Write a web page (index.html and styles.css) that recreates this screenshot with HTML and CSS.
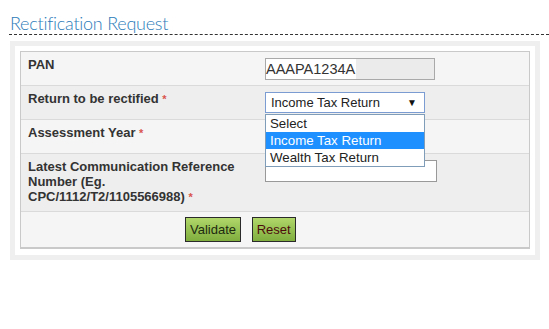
FILE: index.html
```html
<!DOCTYPE html>
<html>
<head>
<meta charset="utf-8">
<link rel="stylesheet" href="styles.css">
</head>
<body>
<h2 class="page-title">Rectification Request</h2>
<div class="panel">
  <table class="form-table">
    <tr class="row-light">
      <td class="label">PAN</td>
      <td class="field"><div class="pan-input"><span class="pan-text">AAAPA1234A</span></div></td>
    </tr>
    <tr class="row-dark">
      <td class="label">Return to be rectified <span class="req">*</span></td>
      <td class="field">
        <div class="select-wrap">
          <div class="select-box"><span>Income Tax Return</span><span class="arrow">&#9660;</span></div>
          <ul class="dropdown">
            <li>Select</li>
            <li class="active">Income Tax Return</li>
            <li>Wealth Tax Return</li>
          </ul>
        </div>
      </td>
    </tr>
    <tr class="row-light">
      <td class="label">Assessment Year <span class="req">*</span></td>
      <td class="field"></td>
    </tr>
    <tr class="row-dark tall">
      <td class="label">Latest Communication Reference Number (Eg. CPC/1112/T2/1105566988) <span class="req">*</span></td>
      <td class="field"><div class="text-input"></div></td>
    </tr>
    <tr class="row-light last">
      <td colspan="2" class="actions">
        <button class="btn btn-validate">Validate</button>
        <button class="btn btn-reset">Reset</button>
      </td>
    </tr>
  </table>
</div>
</body>
</html>
```
FILE: styles.css
```css
html, body {
  margin: 0;
  padding: 0;
  background: #fff;
}
body {
  font-family: Arial, "Liberation Sans", sans-serif;
  overflow: hidden;
}
.page-title {
  margin: 0 0 0 9px;
  padding: 13px 0 0 1px;
  font-family: Lato, "Open Sans", sans-serif;
  font-weight: 300;
  font-size: 18px;
  letter-spacing: -0.25px;
  line-height: 21px;
  color: #2b7bb9;
  border-bottom: 1px dashed #333;
  height: 21px;
}
.panel {
  margin: 6px 0 0 10px;
  width: 510px;
  border: 5px solid #efefef;
  padding: 5px 5px 6px 5px;
  background: #fff;
}
.form-table {
  width: 510px;
  border-collapse: separate;
  border-spacing: 0;
  border: 1px solid #c9c9c9;
  border-bottom-width: 2px;
  font-size: 13px;
  color: #333;
}
.form-table td {
  box-sizing: border-box;
  vertical-align: top;
  border-bottom: 1px solid #dadada;
  padding: 0;
}
.form-table tr.last td {
  border-bottom: 0;
}
.row-light td { background: #f5f5f5; }
.row-dark td { background: #eeeeee; }
.form-table tr td { height: 34px; }
.form-table tr.tall td { height: 58px; }
.form-table tr.last td { height: 35px; }
.label {
  width: 244px;
  padding: 5px 7px 0 7px !important;
  font-weight: bold;
  line-height: 15px;
}
.req {
  color: #d9534f;
  font-size: 11px;
}
.field {
  padding: 6px 0 0 0 !important;
}
.pan-input {
  width: 168px;
  height: 20px;
  border: 1px solid #a9a9a9;
  background: #ebebeb;
  font-size: 14.5px;
  line-height: 20px;
}
.pan-text {
  display: inline-block;
  background: #fff;
  padding-right: 1px;
}
.select-wrap {
  position: relative;
  width: 160px;
}
.select-box {
  box-sizing: border-box;
  width: 160px;
  height: 21px;
  border: 1px solid #7a9cd3;
  background: #fff;
  display: flex;
  align-items: center;
  justify-content: space-between;
  padding: 0 7px 0 5px;
  font-size: 13px;
  color: #222;
}
.arrow {
  font-size: 10px;
  color: #111;
}
.dropdown {
  position: absolute;
  left: 0;
  top: 22px;
  width: 160px;
  box-sizing: border-box;
  margin: 0;
  padding: 0;
  list-style: none;
  background: #fff;
  border: 1px solid #7f9db9;
  z-index: 5;
}
.dropdown li {
  height: 17px;
  line-height: 17px;
  padding-left: 4px;
  font-size: 13.3px;
  color: #222;
}
.dropdown li.active {
  background: #1e90ff;
  color: #fff;
}
.text-input {
  width: 170px;
  height: 20px;
  border: 1px solid #999;
  background: #fff;
}
.actions {
  padding: 5px 0 0 164px !important;
}
.btn {
  height: 25px;
  margin: 0 7px 0 0;
  padding: 0 4px;
  border: 1px solid #2a2a2a;
  background: linear-gradient(#b0d76a, #7fad3e);
  font-family: Arial, "Liberation Sans", sans-serif;
  font-size: 13px;
  color: #1d2a10;
  vertical-align: top;
}
.btn-reset {
  color: #4d0c0c;
}
```
